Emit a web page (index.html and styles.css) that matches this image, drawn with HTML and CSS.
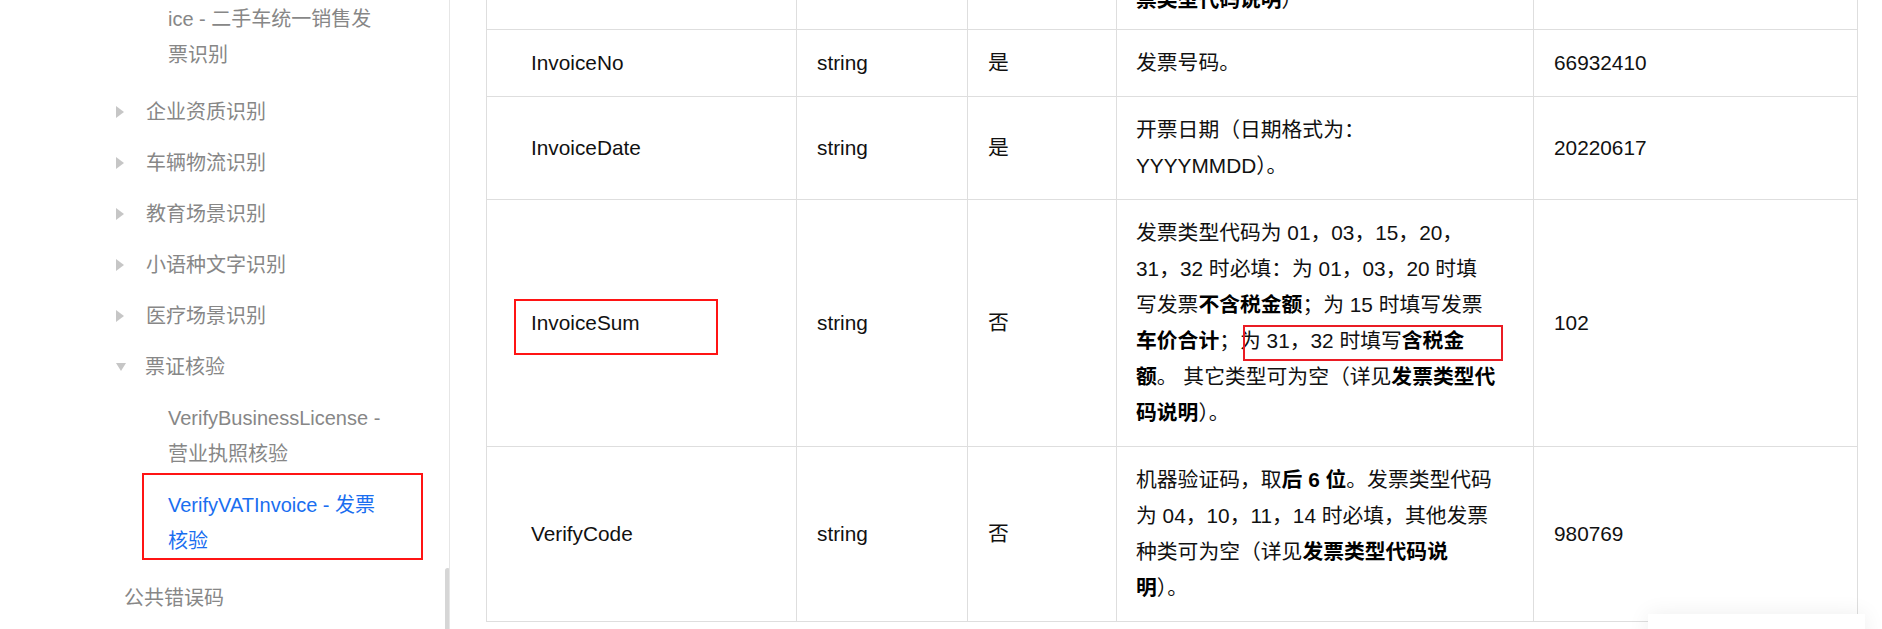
FILE: index.html
```html
<!DOCTYPE html>
<html lang="zh-CN">
<head>
<meta charset="utf-8">
<title>VerifyVATInvoice - 发票核验</title>
<link rel="stylesheet" href="styles.css">
</head>
<body>
<div class="page">
  <aside class="sidebar">
    <ul class="nav">
      <li>
        <ul class="sub">
          <li class="sub-item">ice - 二手车统一销售发票识别</li>
        </ul>
      </li>
      <li class="nav-item"><span class="caret"></span>企业资质识别</li>
      <li class="nav-item"><span class="caret"></span>车辆物流识别</li>
      <li class="nav-item"><span class="caret"></span>教育场景识别</li>
      <li class="nav-item"><span class="caret"></span>小语种文字识别</li>
      <li class="nav-item"><span class="caret"></span>医疗场景识别</li>
      <li class="nav-item"><span class="caret caret-open"></span>票证核验</li>
      <li>
        <ul class="sub">
          <li class="sub-item">VerifyBusinessLicense - 营业执照核验</li>
          <li class="sub-item active">VerifyVATInvoice - 发票核验</li>
        </ul>
      </li>
      <li class="nav-top">公共错误码</li>
    </ul>
    <div class="scroll-thumb"></div>
  </aside>

  <main class="content">
    <table class="params">
      <colgroup>
        <col class="c-name"><col class="c-type"><col class="c-req"><col class="c-desc"><col class="c-ex">
      </colgroup>
      <tbody>
        <tr class="row-cut">
          <td class="name"></td><td></td><td></td>
          <td class="desc"><b>票类型代码说明</b>）</td>
          <td></td>
        </tr>
        <tr>
          <td class="name">InvoiceNo</td><td>string</td><td>是</td>
          <td class="desc">发票号码。</td>
          <td>66932410</td>
        </tr>
        <tr>
          <td class="name">InvoiceDate</td><td>string</td><td>是</td>
          <td class="desc">开票日期（日期格式为：<br>YYYYMMDD）。</td>
          <td>20220617</td>
        </tr>
        <tr>
          <td class="name">InvoiceSum</td><td>string</td><td>否</td>
          <td class="desc">发票类型代码为 01，03，15，20，<br>31，32 时必填：为 01，03，20 时填<br>写发票<b>不含税金额</b>；为 15 时填写发票<br><b>车价合计</b>；为 31，32 时填写<b>含税金</b><br><b>额</b>。 其它类型可为空（详见<b>发票类型代</b><br><b>码说明</b>）。</td>
          <td>102</td>
        </tr>
        <tr>
          <td class="name">VerifyCode</td><td>string</td><td>否</td>
          <td class="desc">机器验证码，取<b>后 6 位</b>。发票类型代码<br>为 04，10，11，14 时必填，其他发票<br>种类可为空（详见<b>发票类型代码说</b><br><b>明</b>）。</td>
          <td>980769</td>
        </tr>
      </tbody>
    </table>
  </main>

  <div class="mark mark-nav"></div>
  <div class="mark mark-sum"></div>
  <div class="mark mark-desc"></div>
  <div class="float-box"></div>
</div>
</body>
</html>
```
FILE: styles.css
```css
html, body {
  margin: 0;
  padding: 0;
  background: #fff;
  overflow: hidden;
}

body {
  font-family: "Liberation Sans", Arial, "Noto Sans CJK SC", sans-serif;
}

.page {
  position: relative;
  display: flex;
  width: 1882px;
  height: 629px;
  overflow: hidden;
}

/* ---------- sidebar ---------- */
.sidebar {
  position: relative;
  flex: none;
  width: 449px;
  height: 629px;
  border-right: 1px solid #e6e6e6;
  font-size: 20px;
  line-height: 36px;
  color: #878787;
  overflow: hidden;
}

.nav,
.sub {
  list-style: none;
  margin: 0;
  padding: 0;
}

.nav {
  margin-top: -7px;
}

.sub {
  padding-bottom: 6px;
}

.nav-item {
  display: flex;
  align-items: center;
  padding: 7.5px 0 7.5px 116px;
}

.caret {
  flex: none;
  width: 0;
  height: 0;
  margin: 1px 22px 0 0;
  border-left: 8px solid #c6c6c6;
  border-top: 6px solid transparent;
  border-bottom: 6px solid transparent;
}

.caret-open {
  margin: 0 19px 0 0;
  border-left: 5.5px solid transparent;
  border-right: 5.5px solid transparent;
  border-top: 8px solid #c6c6c6;
  border-bottom: 0;
}

.sub-item {
  padding: 7.5px 63px 7.5px 168px;
}

.sub-item.active {
  color: #1a6ef0;
}

.nav-top {
  padding: 7.5px 0 7.5px 124px;
}

.scroll-thumb {
  position: absolute;
  right: -1px;
  top: 568px;
  width: 5px;
  height: 70px;
  border-radius: 3px 3px 0 0;
  background: #d6d6d6;
}

/* ---------- content ---------- */
.content {
  flex: 1;
  padding-left: 36px;
}

.params {
  margin-top: -19px;
  width: 1372px;
  table-layout: fixed;
  border-collapse: separate;
  border-spacing: 0;
  border-left: 1px solid #dedede;
  border-top: 1px solid #dedede;
  font-size: 20.8px;
  line-height: 36px;
  color: #111;
}

.c-name { width: 310px; }
.c-type { width: 171px; }
.c-req  { width: 149px; }
.c-desc { width: 417px; }
.c-ex   { width: 324px; }

.params td {
  padding: 15px 10px 15px 20px;
  border-right: 1px solid #dedede;
  border-bottom: 1px solid #dedede;
  vertical-align: middle;
  box-sizing: border-box;
}

.params td.name {
  padding-left: 44px;
}

.params td.desc {
  padding-left: 19px;
  padding-right: 0;
  white-space: nowrap;
}

.params .row-cut td {
  padding-top: 0;
  padding-bottom: 11px;
}

.params b {
  font-weight: 700;
  color: #000;
}

/* ---------- annotations ---------- */
.mark {
  position: absolute;
  box-sizing: border-box;
  border: 2px solid #ff1414;
}

.mark-nav {
  left: 142px;
  top: 473px;
  width: 281px;
  height: 87px;
}

.mark-sum {
  left: 514px;
  top: 299px;
  width: 204px;
  height: 56px;
}

.mark-desc {
  left: 1243px;
  top: 325px;
  width: 260px;
  height: 36px;
  border-color: #ea1c24;
}

.float-box {
  position: absolute;
  left: 1648px;
  top: 614px;
  width: 217px;
  height: 60px;
  background: #fff;
  box-shadow: 0 0 22px rgba(0, 0, 0, 0.07);
}
```
